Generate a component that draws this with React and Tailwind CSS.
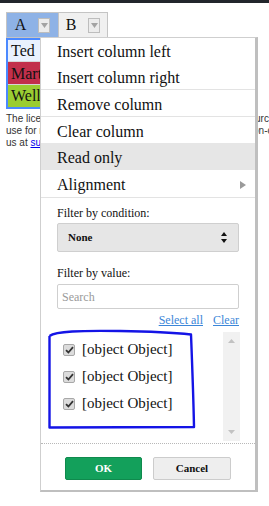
import React from "react";

const serif = "font-['Liberation_Serif','Times_New_Roman',serif]";

const HeaderButton = () => (
  <span className="w-[12px] h-[15px] bg-[#ececec] border border-[#bdbdbd] flex items-center justify-center">
    <svg width="7" height="5" viewBox="0 0 7 5"><path d="M0 0 L7 0 L3.5 5 Z" fill="#a3a3a3" /></svg>
  </span>
);

const MenuItem = ({ label, h, active, arrow }) => (
  <div className={`flex items-center justify-between pl-4 pr-[9px] pt-[3px] text-[16px] text-[#111] ${h} ${active ? "bg-[#e6e6e6]" : ""}`}>
    <span>{label}</span>
    {arrow && (
      <svg width="6" height="8" viewBox="0 0 6 8"><path d="M0 0 L6 4 L0 8 Z" fill="#9a9a9a" /></svg>
    )}
  </div>
);

const CheckRow = () => (
  <div className="h-[27px] flex items-center gap-[7px] pl-[6px]">
    <span className="w-[12px] h-[12px] rounded-[2px] bg-[#dcdcdc] border border-[#a8a8a8] flex items-center justify-center">
      <svg width="9" height="8" viewBox="0 0 9 8"><path d="M1 4.2 L3.4 6.5 L8 1.2" fill="none" stroke="#333" strokeWidth="1.8" /></svg>
    </span>
    <span className="text-[15px] text-[#111]">[object Object]</span>
  </div>
);

const App = () => {
  return (
    <div className={`relative w-[269px] h-[506px] overflow-hidden bg-white ${serif}`}>
      <div className="h-[3px] bg-[#22262c]" />

      <div className="pl-[6px] pt-[9px]">
        <div className="flex h-[26px]">
          <div className="w-[53px] bg-[#8eb2e6] border border-[#c4c4c4] flex items-center justify-center gap-3 text-[16px] text-[#111]">
            <span>A</span>
            <HeaderButton />
          </div>
          <div className="w-[49px] bg-[#f0f0f0] border border-l-0 border-[#c4c4c4] flex items-center justify-center gap-3 text-[16px] text-[#111]">
            <span>B</span>
            <HeaderButton />
          </div>
        </div>
        <div className="w-[53px] border-2 border-[#4b89ff] text-[16px] text-[#111]">
          <div className="h-[22px] bg-[#e9f1fe] pl-[3px] leading-[22px] border-b border-[#d6d6d6]">Ted</div>
          <div className="h-[23px] bg-[#c22f4b] pl-[3px] leading-[23px] border-b border-[#d6d6d6]">Martha</div>
          <div className="h-[22px] bg-[#9acd32] pl-[3px] leading-[22px]">Wellington</div>
        </div>
      </div>

      <div className="pl-[6px] pt-[4px] font-['Liberation_Sans',Arial,sans-serif] text-[10px] leading-[12px] text-[#333] whitespace-nowrap">
        <div>The license key for Handsontable is missing. Use your purchased key to activate the product.</div>
        <div>use for non-commercial purposes by passing the key: 'non-commercial-and-evaluation'.</div>
        <div>
          us at <span className="text-[#0000ee] underline">support@handsontable.com</span>.
        </div>
      </div>

      <div className="absolute left-[40px] top-[37px] w-[218px] bg-white border-l border-t border-[#cfcfcf] border-r-[3px] border-b-[2px] border-r-[#bfbfbf] border-b-[#bfbfbf]">
        <MenuItem label="Insert column left" h="h-[25px]" />
        <MenuItem label="Insert column right" h="h-[26px]" />
        <div className="h-px bg-[#e3e3e3]" />
        <MenuItem label="Remove column" h="h-[26px]" />
        <div className="h-px bg-[#e3e3e3]" />
        <MenuItem label="Clear column" h="h-[26px]" />
        <MenuItem label="Read only" h="h-[27px]" active />
        <MenuItem label="Alignment" h="h-[27px]" arrow />
        <div className="h-px bg-[#e3e3e3]" />

        <div className="pl-4 pt-[7px]">
          <div className="text-[12px] leading-[16px] text-[#111]">Filter by condition:</div>
          <div className="mt-[2px] w-[182px] h-[29px] bg-[#e6e6e6] border border-[#cfcfcf] rounded-[2px] flex items-center justify-between pl-[10px] pr-[11px]">
            <span className="text-[11px] font-bold text-[#111]">None</span>
            <svg width="6" height="11" viewBox="0 0 6 11">
              <path d="M0 4 L3 0 L6 4 Z" fill="#111" />
              <path d="M0 7 L6 7 L3 11 Z" fill="#111" />
            </svg>
          </div>

          <div className="mt-[13px] text-[12px] leading-[16px] text-[#111]">Filter by value:</div>
          <div className="mt-[3px] w-[182px] h-[25px] bg-white border border-[#cfcfcf] rounded-[2px] flex items-center pl-[4px] text-[12px] text-[#9a9a9a]">
            Search
          </div>

          <div className="mt-[4px] w-[182px] flex justify-end gap-[10px] text-[12px] leading-[14px] text-[#3b86d8]">
            <span className="underline">Select all</span>
            <span className="underline">Clear</span>
          </div>

          <div className="mt-[5px] w-[183px] h-[109px] flex">
            <div className="flex-1 pt-[4px]">
              <CheckRow />
              <CheckRow />
              <CheckRow />
            </div>
            <div className="w-[17px] bg-[#f1f1f1] flex flex-col items-center justify-between py-[7px]">
              <svg width="7" height="4" viewBox="0 0 7 4"><path d="M0 4 L3.5 0 L7 4 Z" fill="#c2c2c2" /></svg>
              <svg width="7" height="4" viewBox="0 0 7 4"><path d="M0 0 L7 0 L3.5 4 Z" fill="#c2c2c2" /></svg>
            </div>
          </div>
        </div>

        <div className="mt-[2px] border-t border-dotted border-[#b8b8b8]" />

        <div className="flex justify-center gap-[11px] pt-[13px] pb-[10px]">
          <div className="w-[77px] h-[23px] bg-[#13a05b] border border-[#0f8a4d] rounded-[2px] flex items-center justify-center text-[11px] font-bold text-white">
            OK
          </div>
          <div className="w-[78px] h-[23px] bg-[#eeeeee] border border-[#cccccc] rounded-[2px] flex items-center justify-center text-[11px] font-bold text-[#111]">
            Cancel
          </div>
        </div>
      </div>

      <svg className="absolute left-0 top-0 pointer-events-none" width="269" height="506" viewBox="0 0 269 506">
        <path
          d="M49.5 336 C56 331 80 330.5 120 331 C150 331.5 172 332.5 191 334.5 C192 360 193.5 400 194 427 L49.5 427.5 L49.5 336"
          fill="none"
          stroke="#1414e6"
          strokeWidth="2.4"
          strokeLinejoin="round"
        />
      </svg>
    </div>
  );
};

export default App;
